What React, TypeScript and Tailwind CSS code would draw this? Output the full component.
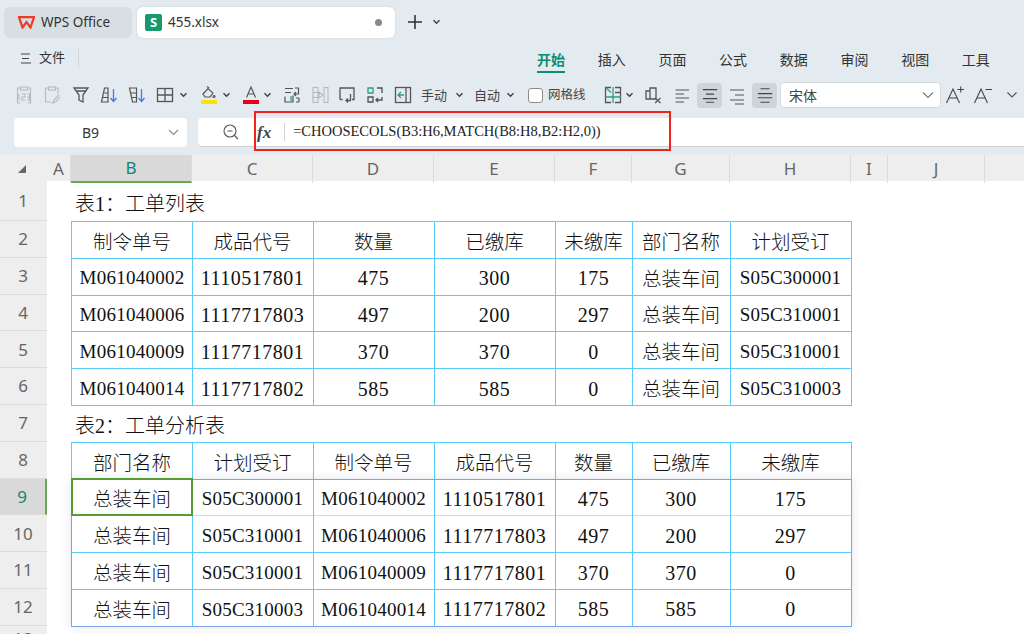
import type { ReactNode } from "react";

const CJK = "font-['Noto_Sans','Noto_Sans_CJK_SC',sans-serif]";
const SERIF = "font-['Liberation_Serif','Noto_Sans_CJK_SC',serif]";

function Chevron({ className = "" }: { className?: string }) {
  return (
    <svg width="9" height="6" viewBox="0 0 9 6" fill="none" stroke="#444" strokeWidth="1.5" className={className}>
      <path d="M1.5 1.2 L4.5 4.2 L7.5 1.2" />
    </svg>
  );
}

// toolbar icon box, children is a 20x20 drawing
function Ico({ w = 28, children }: { w?: number; children: ReactNode }) {
  return (
    <div className="flex shrink-0 items-center justify-center" style={{ width: w }}>
      <svg width="20" height="20" viewBox="0 0 20 20" fill="none" stroke="#555" strokeWidth="1.1">
        {children}
      </svg>
    </div>
  );
}

function Toolbar() {
  return (
    <div className={`flex h-[26px] items-center pl-[10px] text-[13px] text-[#444] ${CJK}`}>
      <Ico>
        <g stroke="#b5b9bb">
          <path d="M6 3 H3.5 V18 H6 M14 3 H16.5 V18 H14" />
          <rect x="6.5" y="2" width="7" height="3" />
          <path d="M5 9 V15 M8 9 H11 V12 H8 V15 H11 M13 9 H15.5 V15 H13 M13 12 H15.5" />
        </g>
      </Ico>
      <Ico>
        <g stroke="#b5b9bb">
          <path d="M6 3 H3.5 V17 H9 M14 3 H16 V9" />
          <rect x="6.5" y="2" width="7" height="3" />
          <path d="M17 10 L12 15 L10.5 18 L13.5 17 L18 12" />
        </g>
      </Ico>
      <div className="w-[1px] shrink-0" />
      <Ico>
        <path d="M3 3 H17 L12 10 V17 L8 15 V10 Z M5.5 6 H14.5" strokeWidth="1.3" />
      </Ico>
      <Ico>
        <path d="M5.5 3 H9 V17 H2.5 Z M4.5 8 H9 M3.5 12.5 H9" strokeWidth="1.2" />
        <path d="M14.5 4 V16 M11.5 13 L14.5 16.5 L17.5 13" stroke="#3f7de0" strokeWidth="1.3" />
      </Ico>
      <Ico>
        <path d="M2.5 3 H9.5 V17 H5.5 Z M3.5 8 H9.5 M4.5 12.5 H9.5" strokeWidth="1.2" />
        <path d="M14.5 4 V16 M11.5 13 L14.5 16.5 L17.5 13" stroke="#3f7de0" strokeWidth="1.3" />
      </Ico>
      <Ico w={28}>
        <rect x="2.5" y="3.5" width="15" height="13" strokeWidth="1.3" />
        <path d="M10 3.5 V16.5 M2.5 10 H17.5" strokeWidth="1.3" />
      </Ico>
      <Chevron className="mr-[8px]" />
      <div className="flex w-[26px] shrink-0 justify-center">
        <svg width="20" height="20" viewBox="0 0 20 20" fill="none" stroke="#555" strokeWidth="1.2">
          <path d="M4 9 L9 3.5 L14 8 L11 12 H6 Z M10 3 L8 1.5" />
          <circle cx="15" cy="11.5" r="1" />
          <rect x="2" y="15" width="16" height="4" fill="#f6e500" stroke="none" />
        </svg>
      </div>
      <Chevron className="mr-[7px]" />
      <div className="ml-[1px] flex w-[24px] shrink-0 justify-center">
        <svg width="20" height="20" viewBox="0 0 20 20" fill="none" stroke="#555" strokeWidth="1.2">
          <path d="M5.5 12.5 L10 2 L14.5 12.5 M7 9 H13" />
          <rect x="2" y="15" width="16" height="4" fill="#e60012" stroke="none" />
        </svg>
      </div>
      <Chevron className="mr-[5px]" />
      <Ico w={29}>
        <path d="M3 3.5 H11 M3 7.5 H9 M3 11.5 V17 H8 M11 10.5 V17 H8 M13 3 H16.5 V9 H12 M14 7 L12 9 L14 11 M14 13 H17 M14 17 H17 M17 13 V17" strokeWidth="1.2" />
        <path d="M9 11 V16" stroke="#3aa57f" strokeWidth="1.4" />
      </Ico>
      <Ico w={27}>
        <g stroke="#b5b9bb">
          <rect x="3" y="2.5" width="5" height="15" />
          <rect x="14" y="2.5" width="4" height="15" />
          <path d="M3 7.5 H8 M3 12.5 H8 M9 7 L13 10 L9 13 Z" />
        </g>
      </Ico>
      <Ico w={28}>
        <path d="M3 14.5 V3 H17 V14.5 H15 M5.5 14.5 H3 M13.5 9 V15.5 H9 M11 13.5 L9 15.5 L11 17.5" strokeWidth="1.3" />
      </Ico>
      <Ico w={28}>
        <path d="M3 12 H8 V17 H3 Z M12 3 H17 V8 M17 12 V15 H11 M13 13 L11 15 L13 17" stroke="#4c5254" strokeWidth="1.3" />
        <path d="M3 3 H8 V8 H3 Z" stroke="#2e9e78" strokeWidth="1.3" />
      </Ico>
      <Ico w={28}>
        <rect x="2.5" y="2.5" width="15" height="15" strokeWidth="1.3" />
        <path d="M13 2.5 V17.5" strokeWidth="1.3" />
        <path d="M11 10 H5 M8 7 L5 10 L8 13" stroke="#2e9e78" strokeWidth="1.3" />
      </Ico>
      <span className="ml-[4px] w-[27px] shrink-0 text-[13px] leading-none">手动</span>
      <Chevron className="ml-[7px] mr-[10px]" />
      <span className="w-[27px] shrink-0 text-[13px] leading-none">自动</span>
      <Chevron className="ml-[5px] mr-[13px]" />
      <div className="h-[15px] w-[15px] shrink-0 rounded-[3px] border border-[#8c8f91] bg-white" />
      <span className="ml-[5px] w-[38px] shrink-0 text-[12.5px] leading-none">网格线</span>
      <div className="ml-[15px] flex w-[24px] shrink-0 justify-center">
        <svg width="20" height="20" viewBox="0 0 20 20" fill="none" stroke="#555" strokeWidth="1.3">
          <path d="M8 2.5 H2.5 V17.5 H8 M12 2.5 H17.5 V17.5 H12 M12 7.5 H17.5" />
          <path d="M2.5 2.5 L8 7.5 M2.5 12 H18 M10 2 V18" stroke="#2e9e78" />
        </svg>
      </div>
      <Chevron className="mr-[6px]" />
      <Ico w={26}>
        <path d="M3 6 H7 V3 H13 V14 H3 Z M7 6 V14" strokeWidth="1.3" />
        <path d="M12 13 L17.5 18 M17.5 13 L12 18" strokeWidth="1.2" />
      </Ico>
      <div className="w-[1px] shrink-0" />
      <Ico w={30}>
        <path d="M3.5 5 H17 M3.5 9 H12 M3.5 13 H17 M3.5 17 H12" strokeWidth="1.1" />
      </Ico>
      <div className="flex h-[25px] w-[25px] shrink-0 items-center justify-center rounded-[4px] bg-[#cdd5d9]">
        <svg width="18" height="18" viewBox="0 0 20 20" fill="none" stroke="#444" strokeWidth="1.2">
          <path d="M2 4 H18 M5.5 9 H14.5 M2 14 H18 M5.5 18 H14.5" />
        </svg>
      </div>
      <Ico w={30}>
        <path d="M3 5 H17 M8 10 H17 M3 15 H17 M8 19 H17" strokeWidth="1.1" />
      </Ico>
      <div className="flex h-[25px] w-[25px] shrink-0 items-center justify-center rounded-[4px] bg-[#cdd5d9]">
        <svg width="18" height="18" viewBox="0 0 20 20" fill="none" stroke="#444" strokeWidth="1.2">
          <path d="M5 3 H15 M2 8.5 H18 M2 13 H18 M5 18 H15" />
        </svg>
      </div>
      <div className="ml-[3px] flex h-[26px] w-[161px] shrink-0 items-center justify-between rounded-[4px] border border-[#d5dadd] bg-white pl-[8px] pr-[6px] text-[14px]">
        <span>宋体</span>
        <svg width="12" height="8" viewBox="0 0 12 8" fill="none" stroke="#777" strokeWidth="1.1">
          <path d="M1 1.5 L6 6.5 L11 1.5" />
        </svg>
      </div>
      <div className="ml-[3px] flex w-[22px] shrink-0 justify-center">
        <svg width="20" height="20" viewBox="0 0 20 20" fill="none" stroke="#444" strokeWidth="1.1">
          <path d="M1.5 18 L8 4 L14.5 18 M4 13 H12 M12.5 4.5 H19 M15.7 1.5 V7.5" />
        </svg>
      </div>
      <div className="ml-[6px] flex w-[22px] shrink-0 justify-center">
        <svg width="20" height="20" viewBox="0 0 20 20" fill="none" stroke="#444" strokeWidth="1.1">
          <path d="M1.5 18 L8 4 L14.5 18 M4 13 H12 M12.5 4.5 H19" />
        </svg>
      </div>
      <svg width="12" height="8" viewBox="0 0 12 8" fill="none" stroke="#555" strokeWidth="1.2" className="ml-[12px]">
        <path d="M1.5 1.5 L6 6 L10.5 1.5" />
      </svg>
    </div>
  );
}

const COLS = "grid grid-cols-[47px_24px_121px_121px_121px_121px_77px_98px_121px_37px_97px_1fr]";
const HEADS = ["A", "B", "C", "D", "E", "F", "G", "H", "I", "J"];

const TABLE1 = [
  ["制令单号", "成品代号", "数量", "已缴库", "未缴库", "部门名称", "计划受订"],
  ["M061040002", "1110517801", "475", "300", "175", "总装车间", "S05C300001"],
  ["M061040006", "1117717803", "497", "200", "297", "总装车间", "S05C310001"],
  ["M061040009", "1117717801", "370", "370", "0", "总装车间", "S05C310001"],
  ["M061040014", "1117717802", "585", "585", "0", "总装车间", "S05C310003"],
];

const TABLE2 = [
  ["部门名称", "计划受订", "制令单号", "成品代号", "数量", "已缴库", "未缴库"],
  ["总装车间", "S05C300001", "M061040002", "1110517801", "475", "300", "175"],
  ["总装车间", "S05C310001", "M061040006", "1117717803", "497", "200", "297"],
  ["总装车间", "S05C310001", "M061040009", "1117717801", "370", "370", "0"],
  ["总装车间", "S05C310003", "M061040014", "1117717802", "585", "585", "0"],
];

function RowHead({ n, active }: { n: number; active?: boolean }) {
  return (
    <div
      className={`flex items-center justify-center border-b border-[#dcdcdc] pr-[1px] text-[17px] ${
        active ? "border-r-[2px] border-r-[#6aa84f] bg-[#d9d9d9] text-[#14866f]" : "bg-[#eeeeee] text-[#666]"
      }`}
    >
      {n}
    </div>
  );
}

function cellText(c: string) {
  if (/[\u4e00-\u9fff]/.test(c)) return "pt-[6px] text-[19.5px] font-light";
  if (/^[MS]/.test(c)) return "pt-[5px] text-[19px] tracking-[0.25px]";
  return "pt-[4px] text-[20px] tracking-[0.5px]";
}

function TableRow({
  n,
  cells,
  top,
  selected,
}: {
  n: number;
  cells: string[];
  top?: boolean;
  selected?: boolean;
}) {
  return (
    <div className={`${COLS} h-[36.8px]`}>
      <RowHead n={n} active={selected} />
      <div />
      {cells.map((c, i) => (
        <div
          key={i}
          className={`relative -mb-[1px] -mr-[1px] flex items-center justify-center border-r border-b border-[#58cdfb] text-[#111] ${SERIF} ${cellText(c)} ${
            top ? "border-t" : ""
          } ${i === 0 ? "border-l" : ""} ${selected && i > 0 ? "border-b-[#aee8fb]" : ""}`}
        >
          {c}
          {selected && i === 0 && (
            <div className="absolute inset-[-1px] z-10 border-[2.5px] border-[#579b32]" />
          )}
        </div>
      ))}
    </div>
  );
}

function TitleRow({ n, title, h }: { n: number; title: string; h: string }) {
  return (
    <div className={`${COLS} ${h}`}>
      <RowHead n={n} />
      <div />
      <div className={`col-span-7 flex items-center whitespace-nowrap pl-[4px] pt-[5px] text-[20px] font-light text-[#111] ${SERIF}`}>
        {title}
      </div>
    </div>
  );
}

export default function App() {
  return (
    <div className={`flex h-[634px] w-[1024px] flex-col overflow-hidden bg-[#e4ebf0] ${CJK}`}>
      {/* tabs */}
      <div className="flex h-[45px] shrink-0 items-start pl-[4px] pt-[7px]">
        <div className="flex h-[31px] w-[128px] items-center rounded-[6px] bg-[#d8dfe3] pl-[14px]">
          <svg width="17" height="13" viewBox="0 0 17 13" fill="none">
            <path d="M1 1.2 H16 L12.5 11.5 L8.5 6 L4.5 11.5 Z" stroke="#ee3a2d" strokeWidth="2.2" />
          </svg>
          <span className="ml-[6px] text-[13.5px] text-[#333]">WPS Office</span>
        </div>
        <div className="ml-[5px] flex h-[31px] w-[258px] items-center rounded-[6px] bg-white pl-[8px] pr-[13px] shadow-[0_0_2px_rgba(0,0,0,0.15)]">
          <div className="flex h-[17px] w-[17px] items-center justify-center rounded-[2px] bg-[#17996c] text-[13px] font-bold leading-none text-white">
            S
          </div>
          <span className="ml-[6px] text-[13.5px] text-[#333]">455.xlsx</span>
          <div className="ml-auto h-[7px] w-[7px] rounded-full bg-[#888]" />
        </div>
        <svg width="18" height="18" viewBox="0 0 18 18" stroke="#333" strokeWidth="1.6" className="ml-[11px] mt-[6px]">
          <path d="M9 2 V16 M2 9 H16" />
        </svg>
        <Chevron className="ml-[8px] mt-[12px]" />
      </div>

      {/* menu row */}
      <div className="flex h-[35px] shrink-0 items-center pb-[9px]">
        <svg width="12" height="11" viewBox="0 0 12 11" stroke="#444" strokeWidth="1.1" className="ml-[20px]">
          <path d="M1 1 H10 M2 5.5 H9 M1 10 H11" />
        </svg>
        <span className="ml-[7px] text-[13px] text-[#333]">文件</span>
        <div className="ml-[13px] h-[18px] w-[1px] bg-[#cfd6da]" />
        <div className="ml-[458px] mt-[3px] flex text-[14px] text-[#333]">
          <span className="relative w-[28px] text-center font-bold text-[#0b8f73]">
            开始
            <span className="absolute bottom-[-3px] left-0 h-[2px] w-full bg-[#0b8f73]" />
          </span>
          <span className="ml-[32.7px] w-[28px]">插入</span>
          <span className="ml-[32.7px] w-[28px]">页面</span>
          <span className="ml-[32.7px] w-[28px]">公式</span>
          <span className="ml-[32.7px] w-[28px]">数据</span>
          <span className="ml-[32.7px] w-[28px]">审阅</span>
          <span className="ml-[32.7px] w-[28px]">视图</span>
          <span className="ml-[32.7px] w-[28px]">工具</span>
        </div>
      </div>

      <div className="h-[2px] shrink-0" />
      <Toolbar />

      {/* formula bar */}
      <div className="relative mt-[10px] flex h-[29px] shrink-0 items-stretch pl-[14px]">
        <div className="relative flex w-[173px] items-center justify-center rounded-[4px] bg-white pr-[20px] text-[14px] text-[#333]">
          B9
          <svg width="11" height="7" viewBox="0 0 11 7" fill="none" stroke="#888" strokeWidth="1.1" className="absolute right-[8px]">
            <path d="M1 1 L5.5 5.5 L10 1" />
          </svg>
        </div>
        <div className="ml-[11px] flex flex-1 items-center rounded-l-[4px] border-b border-[#cfd3d6] bg-white">
          <svg width="18" height="18" viewBox="0 0 18 18" fill="none" stroke="#555" strokeWidth="1.1" className="ml-[24px]">
            <circle cx="8" cy="8" r="6" />
            <path d="M12.5 12.5 L16 16 M5.5 8 H10.5" />
          </svg>
          <span className="ml-[17px] font-['Liberation_Serif',serif] text-[17px] font-semibold italic leading-none text-[#444]">
            fx
          </span>
          <div className="ml-[13px] h-[18px] w-[1px] bg-[#cfd3d6]" />
          <span className="ml-[8px] whitespace-nowrap font-['Liberation_Serif',serif] text-[14.5px] text-[#222]">
            =CHOOSECOLS(B3:H6,MATCH(B8:H8,B2:H2,0))
          </span>
        </div>
        {/* red annotation box from the screenshot */}
        <div className="absolute left-[254px] top-[-7px] h-[40px] w-[417px] border-[2px] border-[#f0241c]" />
      </div>

      <div className="h-[8px] shrink-0" />

      {/* sheet */}
      <div className="flex-1 bg-white">
        <div className={`${COLS} h-[26px] bg-[#eeeeee] text-[17px] text-[#666]`}>
          <div className="flex items-center justify-center">
            <svg width="9" height="8" viewBox="0 0 9 8" className="ml-[-3px]">
              <path d="M8 0 V8 H0 Z" fill="#666" />
            </svg>
          </div>
          {HEADS.map((h) => (
            <div
              key={h}
              className={`flex items-center justify-center border-r border-[#dcdcdc] ${
                h === "B" ? "border-b-[2px] border-b-[#6aa84f] bg-[#d9d9d9] text-[#14866f]" : ""
              }`}
            >
              {h}
            </div>
          ))}
          <div />
        </div>
        <TitleRow n={1} title="表1：工单列表" h="h-[40px]" />
        {TABLE1.map((r, i) => (
          <TableRow key={i} n={i + 2} cells={r} top={i === 0} />
        ))}
        <TitleRow n={7} title="表2：工单分析表" h="h-[36.8px]" />
        <TableRow n={8} cells={TABLE2[0]} top />
        {/* spill range of the formula, blue outline with a soft shadow */}
        <div className="relative">
          {TABLE2.slice(1).map((r, i) => (
            <TableRow key={i} n={i + 9} cells={r} selected={i === 0} />
          ))}
          <div className="pointer-events-none absolute bottom-[-1px] left-[71px] top-0 w-[781px] border border-[#7fa3e3] shadow-[0_0_10px_rgba(90,110,160,0.18)]" />
        </div>
        <div className={`${COLS} h-[10px]`}>
          <RowHead n={13} />
        </div>
      </div>
    </div>
  );
}
